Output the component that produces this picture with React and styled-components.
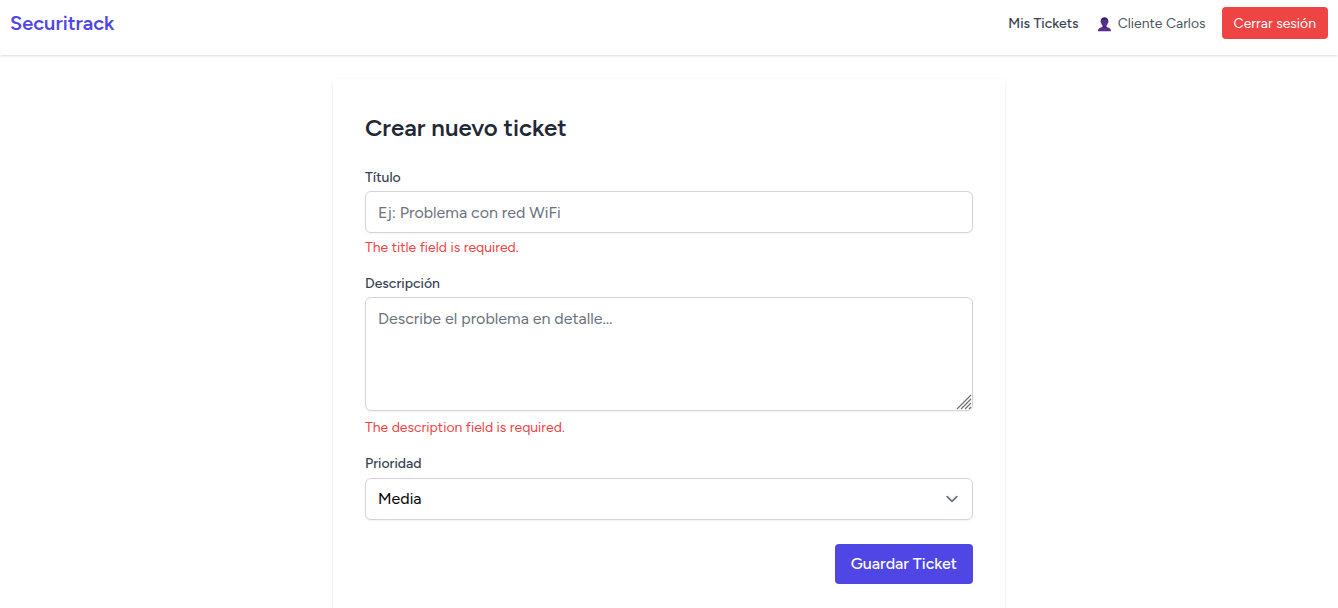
import React from "react";
import styled, { createGlobalStyle } from "styled-components";

const GlobalStyle = createGlobalStyle`
  *, *::before, *::after { box-sizing: border-box; }
  body {
    margin: 0;
    background: #fff;
    color: #1f2937;
    font-family: Figtree, Lato, "Liberation Sans", sans-serif;
    font-size: 16px;
    line-height: 24px;
  }
  h1, p { margin: 0; }
  input, textarea, select, button { font: inherit; }
`;

const Header = styled.header`
  display: flex;
  align-items: center;
  justify-content: space-between;
  padding: 7px 10px 16px;
  background: #fff;
  box-shadow: 0 1px 3px rgba(0, 0, 0, 0.1), 0 1px 2px -1px rgba(0, 0, 0, 0.1);
`;

const Brand = styled.a`
  color: #4f46e5;
  font-size: 20px;
  line-height: 28px;
  font-weight: 600;
  text-decoration: none;
`;

const Nav = styled.nav`
  display: flex;
  align-items: center;
  gap: 16px;
  font-size: 14px;
  line-height: 20px;
`;

const NavLink = styled.a`
  padding-top: 2px;
  color: #374151;
  font-weight: 500;
  text-decoration: none;
`;

const User = styled.span`
  display: flex;
  align-items: center;
  gap: 4px;
  padding-top: 2px;
  color: #4b5563;
`;

const Button = styled.button`
  border: 0;
  border-radius: 4px;
  color: #fff;
  cursor: pointer;
  background: ${(p) => (p.$tone === "danger" ? "#ef4444" : "#4f46e5")};
  padding: ${(p) => (p.$tone === "danger" ? "7px 12px 5px" : "8px 16px")};
  font-weight: ${(p) => (p.$tone === "danger" ? 400 : 500)};
`;

const Main = styled.main`
  padding: 24px;
`;

const Card = styled.form`
  max-width: 672px;
  margin: 0 auto;
  padding: 33px 32px 32px;
  border-radius: 4px;
  background: #fff;
  box-shadow: 0 1px 3px rgba(0, 0, 0, 0.1), 0 1px 2px -1px rgba(0, 0, 0, 0.1);
`;

const Title = styled.h1`
  margin-bottom: 24px;
  font-size: 24px;
  line-height: 32px;
  font-weight: 600;
`;

const Field = styled.div`
  display: flex;
  flex-direction: column;
  gap: 3px;
  margin-bottom: ${(p) => (p.$last ? "24px" : "16px")};
`;

const Label = styled.label`
  color: #374151;
  font-size: 14px;
  line-height: 20px;
  font-weight: 500;
`;

const Input = styled.input`
  width: 100%;
  padding: 9px 12px 7px;
  border: 1px solid #d1d5db;
  border-radius: 6px;
  background: #fff;
  color: #000;
  line-height: 24px;
  box-shadow: 0 1px 2px rgba(0, 0, 0, 0.05);
  &::placeholder { color: #6b7280; opacity: 1; }
`;

const TextAreaBox = styled.div`
  display: grid;
  margin-bottom: 2px;
  & > * { grid-area: 1 / 1; }
`;

const TextArea = styled(Input)`
  display: block;
  resize: vertical;
  &::-webkit-resizer { background: transparent; }
`;

const Grip = styled.svg`
  place-self: end;
  margin: 0 1px 1px 0;
  pointer-events: none;
`;

const SelectBox = styled.div`
  display: grid;
  align-items: center;
  padding-top: 1px;
  & > * { grid-area: 1 / 1; }
`;

const Select = styled(Input)`
  appearance: none;
  padding: 8px 40px 8px 12px;
`;

const Chevron = styled.svg`
  justify-self: end;
  margin-right: 9px;
  pointer-events: none;
`;

const ErrorText = styled.p`
  margin-top: 2px;
  color: #ef4444;
  font-size: 14px;
  line-height: 20px;
`;

const Actions = styled.div`
  display: flex;
  justify-content: flex-end;
`;

function UserIcon() {
  return (
    <svg width="19" height="15" viewBox="-2 0 19 15" aria-hidden="true">
      <path
        fill="#54308c"
        d="M7.5 0.5C5 0.5 3.8 2 3.8 4.1C3.3 4.3 3.4 5.7 4.1 6C4.4 7.3 5 8.2 5.6 8.7V10C3.2 10.6 1 11.2 1 14.2H14C14 11.2 11.8 10.6 9.4 10V8.7C10 8.2 10.6 7.3 10.9 6C11.6 5.7 11.7 4.3 11.2 4.1C11.2 2 10 0.5 7.5 0.5Z"
      />
      <path
        fill="#3b2067"
        d="M7.5 0.5C5 0.5 3.8 2 3.8 4.1L4.4 4.6C4.5 3.4 5 2.8 6 2.7C7.5 2.9 9 2.5 10 3C10.5 3.4 10.6 4 10.6 4.6L11.2 4.1C11.2 2 10 0.5 7.5 0.5ZM5.6 9C6.7 9.8 8.3 9.8 9.4 9V10C8.3 10.8 6.7 10.8 5.6 10Z"
      />
    </svg>
  );
}

export default function App() {
  return (
    <>
      <GlobalStyle />
      <Header>
        <Brand href="#">Securitrack</Brand>
        <Nav>
          <NavLink href="#tickets">Mis Tickets</NavLink>
          <User>
            <UserIcon />
            Cliente Carlos
          </User>
          <Button type="button" $tone="danger">Cerrar sesión</Button>
        </Nav>
      </Header>
      <Main>
        <Card noValidate onSubmit={(e) => e.preventDefault()}>
          <Title>Crear nuevo ticket</Title>
          <Field>
            <Label htmlFor="titulo">Título</Label>
            <Input id="titulo" type="text" placeholder="Ej: Problema con red WiFi" aria-describedby="titulo-error" />
            <ErrorText id="titulo-error">The title field is required.</ErrorText>
          </Field>
          <Field>
            <Label htmlFor="descripcion">Descripción</Label>
            <TextAreaBox>
              <TextArea as="textarea" id="descripcion" rows={4} placeholder="Describe el problema en detalle..." aria-describedby="descripcion-error" />
              <Grip width="16" height="16" viewBox="0 0 16 16" aria-hidden="true">
                <path d="M1 15L15 1M5 15L15 5M9 15L15 9M13 15L15 13" stroke="#6f6f6f" strokeWidth="1.2" />
              </Grip>
            </TextAreaBox>
            <ErrorText id="descripcion-error">The description field is required.</ErrorText>
          </Field>
          <Field $last>
            <Label htmlFor="prioridad">Prioridad</Label>
            <SelectBox>
              <Select as="select" id="prioridad" defaultValue="media">
                <option value="baja">Baja</option>
                <option value="media">Media</option>
                <option value="alta">Alta</option>
              </Select>
              <Chevron width="24" height="24" viewBox="0 0 20 20" fill="none" aria-hidden="true">
                <path d="M6 8l4 4 4-4" stroke="#6b7280" strokeWidth="1.5" strokeLinecap="round" strokeLinejoin="round" />
              </Chevron>
            </SelectBox>
          </Field>
          <Actions>
            <Button type="submit">Guardar Ticket</Button>
          </Actions>
        </Card>
      </Main>
    </>
  );
}
